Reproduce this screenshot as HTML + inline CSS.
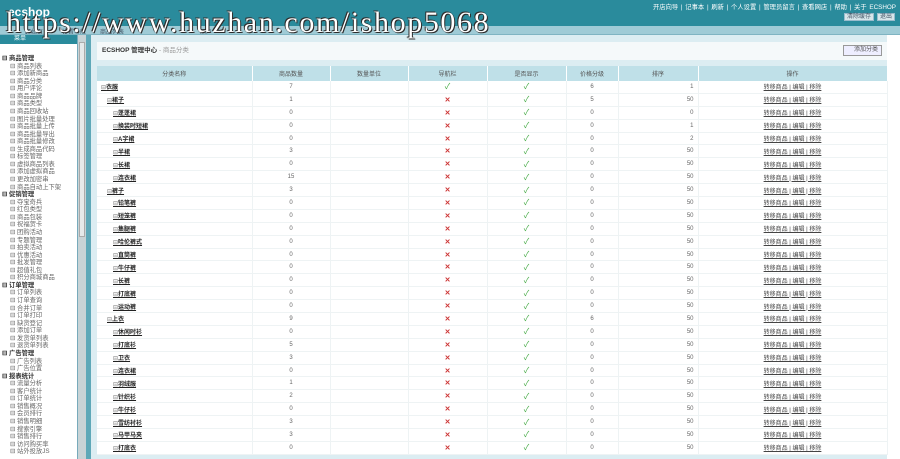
<!DOCTYPE html>
<html><head><meta charset="utf-8"><style>
*{margin:0;padding:0;box-sizing:border-box}
html,body{width:900px;height:459px;overflow:hidden}
body{background:#fff;font-family:"Liberation Sans","Noto Sans CJK SC",sans-serif;font-size:6.5px;color:#333;position:relative}
#top{position:absolute;left:0;top:0;width:900px;height:26px;background:#2a8b9c}
#logo{position:absolute;left:8px;top:5px;color:#fff;font-size:12px;font-weight:bold;letter-spacing:0px}
#links{position:absolute;right:4px;top:2px;color:#fff;font-size:6.3px;word-spacing:1px;white-space:nowrap}
#btns{position:absolute;right:5px;top:13px;white-space:nowrap}
#btns span{display:inline-block;background:#d7e6ea;color:#456;border:1px solid #9bc;font-size:6px;padding:0 2px;height:8px;line-height:7px;margin-left:3px}
#tabs{position:absolute;left:0;top:26px;width:900px;height:9px;background:#9fcbd6;border-bottom:1px solid #7fb4c2;overflow:hidden}
#tabs span{position:absolute;top:1px;font-size:6px;color:#456}
#wm{position:absolute;left:6px;top:6px;font-family:"Liberation Serif",serif;font-size:30px;color:#fff;text-shadow:0 0 1px #000,1px 1px 0 #333,-1px -1px 0 #333;letter-spacing:1.6px;z-index:9;white-space:nowrap}
#side{position:absolute;left:0;top:35px;width:78px;height:424px;background:#fff;border-right:1px solid #7ab;overflow:hidden}
#sidehd{height:9px;background:#2a8b9c;color:#fff;font-size:6px;line-height:9px;padding-left:14px}
#menu{position:absolute;left:2px;top:20px;line-height:7.56px;font-size:6.3px;color:#666;white-space:nowrap}
#menu b{font-weight:bold;color:#333}
#menu div{padding-left:8px}
#sb{position:absolute;left:78px;top:35px;width:8px;height:424px;background:#c8d3d6}
#sbt{position:absolute;left:79px;top:42px;width:6px;height:195px;background:#e5e9ea;border:1px solid #aaa}
#strip{position:absolute;left:86px;top:35px;width:5px;height:424px;background:#5ea8b8}
#main{position:absolute;left:91px;top:35px;width:809px;height:424px;background:#dcedf2}
#rwhite{position:absolute;left:887px;top:35px;width:13px;height:424px;background:#fff}
#title{position:absolute;left:97px;top:42px;width:790px;height:18px;background:#f5f9fa;font-size:6.5px;line-height:18px;padding-left:5px;font-weight:bold;color:#333}
#title i{font-style:normal;font-weight:normal;color:#999}
#add{position:absolute;left:746px;top:3px;width:39px;height:11px;border:1px solid #999;background:#eef;font-size:6px;line-height:9px;padding-left:10px;color:#555;font-weight:normal}
table{position:absolute;left:97px;top:66px;width:790px;border-collapse:collapse;background:#fff;table-layout:fixed}
th{height:14.5px;background:#bfe0e8;font-weight:normal;font-size:6px;color:#555;border-right:1px solid #fff}
td{height:12.9px;border-bottom:1px solid #eef3f4;border-right:1px solid #eef3f4;text-align:center;font-size:6px;color:#666;padding:0;white-space:nowrap;overflow:hidden}
td.n{text-align:left;color:#222;text-decoration:underline;font-weight:bold}
td.n s{text-decoration:none;font-weight:normal;color:#777}
td.r{text-align:right;padding-right:4px}
.x{color:#c33;font-weight:bold;font-size:7px}.c{color:#4a4;font-size:8px}
.op{text-decoration:underline;color:#444}
</style></head><body>
<div id="top"><div id="logo">ecshop</div>
<div id="links">开店向导 | 记事本 | 刷新 | 个人设置 | 管理员留言 | 查看网店 | 帮助 | 关于 ECSHOP</div>
<div id="btns"><span>清除缓存</span><span>退出</span></div></div>
<div id="tabs"><span style="left:25px">起始页</span><span style="left:62px">设置导航</span><span style="left:100px">商品列表</span><span style="left:200px">用户</span></div>
<div id="wm">https://www.huzhan.com/ishop5068</div>
<div id="side"><div id="sidehd">菜单</div>
<div id="menu">
<b>⊟ 商品管理</b><div>⊟ 商品列表</div><div>⊟ 添加新商品</div><div>⊟ 商品分类</div><div>⊟ 用户评论</div><div>⊟ 商品品牌</div><div>⊟ 商品类型</div><div>⊟ 商品回收站</div><div>⊟ 图片批量处理</div><div>⊟ 商品批量上传</div><div>⊟ 商品批量导出</div><div>⊟ 商品批量修改</div><div>⊟ 生成商品代码</div><div>⊟ 标签管理</div><div>⊟ 虚拟商品列表</div><div>⊟ 添加虚拟商品</div><div>⊟ 更改加密串</div><div>⊟ 商品自动上下架</div>
<b>⊟ 促销管理</b><div>⊟ 夺宝奇兵</div><div>⊟ 红包类型</div><div>⊟ 商品包装</div><div>⊟ 祝福贺卡</div><div>⊟ 团购活动</div><div>⊟ 专题管理</div><div>⊟ 拍卖活动</div><div>⊟ 优惠活动</div><div>⊟ 批发管理</div><div>⊟ 超值礼包</div><div>⊟ 积分商城商品</div>
<b>⊟ 订单管理</b><div>⊟ 订单列表</div><div>⊟ 订单查询</div><div>⊟ 合并订单</div><div>⊟ 订单打印</div><div>⊟ 缺货登记</div><div>⊟ 添加订单</div><div>⊟ 发货单列表</div><div>⊟ 退货单列表</div>
<b>⊟ 广告管理</b><div>⊟ 广告列表</div><div>⊟ 广告位置</div>
<b>⊟ 报表统计</b><div>⊟ 流量分析</div><div>⊟ 客户统计</div><div>⊟ 订单统计</div><div>⊟ 销售概况</div><div>⊟ 会员排行</div><div>⊟ 销售明细</div><div>⊟ 搜索引擎</div><div>⊟ 销售排行</div><div>⊟ 访问购买率</div><div>⊟ 站外投放JS</div>
</div></div>
<div id="sb"></div><div id="sbt"></div><div id="strip"></div>
<div id="main"></div><div id="rwhite"></div>
<div id="title">ECSHOP 管理中心<i> - 商品分类</i><span id="add">添加分类</span></div>
<table>
<colgroup><col style="width:155px"><col style="width:78px"><col style="width:78px"><col style="width:79px"><col style="width:79px"><col style="width:52px"><col style="width:80px"><col style="width:189px"></colgroup>
<tr><th>分类名称</th><th>商品数量</th><th>数量单位</th><th>导航栏</th><th>是否显示</th><th>价格分级</th><th>排序</th><th>操作</th></tr>
<tr><td class="n" style="padding-left:4px"><s>⊟</s>衣服</td><td>7</td><td></td><td class="c">✓</td><td class="c">✓</td><td>6</td><td class="r">1</td><td class="op">转移商品 | 编辑 | 移除</td></tr>
<tr><td class="n" style="padding-left:10px"><s>⊟</s>裙子</td><td>1</td><td></td><td class="x">✕</td><td class="c">✓</td><td>5</td><td class="r">50</td><td class="op">转移商品 | 编辑 | 移除</td></tr>
<tr><td class="n" style="padding-left:16px"><s>⊟</s>蓬蓬裙</td><td>0</td><td></td><td class="x">✕</td><td class="c">✓</td><td>0</td><td class="r">0</td><td class="op">转移商品 | 编辑 | 移除</td></tr>
<tr><td class="n" style="padding-left:16px"><s>⊟</s>换装时短裙</td><td>0</td><td></td><td class="x">✕</td><td class="c">✓</td><td>0</td><td class="r">1</td><td class="op">转移商品 | 编辑 | 移除</td></tr>
<tr><td class="n" style="padding-left:16px"><s>⊟</s>A字裙</td><td>0</td><td></td><td class="x">✕</td><td class="c">✓</td><td>0</td><td class="r">2</td><td class="op">转移商品 | 编辑 | 移除</td></tr>
<tr><td class="n" style="padding-left:16px"><s>⊟</s>半裙</td><td>3</td><td></td><td class="x">✕</td><td class="c">✓</td><td>0</td><td class="r">50</td><td class="op">转移商品 | 编辑 | 移除</td></tr>
<tr><td class="n" style="padding-left:16px"><s>⊟</s>长裙</td><td>0</td><td></td><td class="x">✕</td><td class="c">✓</td><td>0</td><td class="r">50</td><td class="op">转移商品 | 编辑 | 移除</td></tr>
<tr><td class="n" style="padding-left:16px"><s>⊟</s>连衣裙</td><td>15</td><td></td><td class="x">✕</td><td class="c">✓</td><td>0</td><td class="r">50</td><td class="op">转移商品 | 编辑 | 移除</td></tr>
<tr><td class="n" style="padding-left:10px"><s>⊟</s>裤子</td><td>3</td><td></td><td class="x">✕</td><td class="c">✓</td><td>0</td><td class="r">50</td><td class="op">转移商品 | 编辑 | 移除</td></tr>
<tr><td class="n" style="padding-left:16px"><s>⊟</s>铅笔裤</td><td>0</td><td></td><td class="x">✕</td><td class="c">✓</td><td>0</td><td class="r">50</td><td class="op">转移商品 | 编辑 | 移除</td></tr>
<tr><td class="n" style="padding-left:16px"><s>⊟</s>短笼裤</td><td>0</td><td></td><td class="x">✕</td><td class="c">✓</td><td>0</td><td class="r">50</td><td class="op">转移商品 | 编辑 | 移除</td></tr>
<tr><td class="n" style="padding-left:16px"><s>⊟</s>集腿裤</td><td>0</td><td></td><td class="x">✕</td><td class="c">✓</td><td>0</td><td class="r">50</td><td class="op">转移商品 | 编辑 | 移除</td></tr>
<tr><td class="n" style="padding-left:16px"><s>⊟</s>哈伦裤式</td><td>0</td><td></td><td class="x">✕</td><td class="c">✓</td><td>0</td><td class="r">50</td><td class="op">转移商品 | 编辑 | 移除</td></tr>
<tr><td class="n" style="padding-left:16px"><s>⊟</s>直筒裤</td><td>0</td><td></td><td class="x">✕</td><td class="c">✓</td><td>0</td><td class="r">50</td><td class="op">转移商品 | 编辑 | 移除</td></tr>
<tr><td class="n" style="padding-left:16px"><s>⊟</s>牛仔裤</td><td>0</td><td></td><td class="x">✕</td><td class="c">✓</td><td>0</td><td class="r">50</td><td class="op">转移商品 | 编辑 | 移除</td></tr>
<tr><td class="n" style="padding-left:16px"><s>⊟</s>长裤</td><td>0</td><td></td><td class="x">✕</td><td class="c">✓</td><td>0</td><td class="r">50</td><td class="op">转移商品 | 编辑 | 移除</td></tr>
<tr><td class="n" style="padding-left:16px"><s>⊟</s>打底裤</td><td>0</td><td></td><td class="x">✕</td><td class="c">✓</td><td>0</td><td class="r">50</td><td class="op">转移商品 | 编辑 | 移除</td></tr>
<tr><td class="n" style="padding-left:16px"><s>⊟</s>运动裤</td><td>0</td><td></td><td class="x">✕</td><td class="c">✓</td><td>0</td><td class="r">50</td><td class="op">转移商品 | 编辑 | 移除</td></tr>
<tr><td class="n" style="padding-left:10px"><s>⊟</s>上衣</td><td>9</td><td></td><td class="x">✕</td><td class="c">✓</td><td>6</td><td class="r">50</td><td class="op">转移商品 | 编辑 | 移除</td></tr>
<tr><td class="n" style="padding-left:16px"><s>⊟</s>休闲时衫</td><td>0</td><td></td><td class="x">✕</td><td class="c">✓</td><td>0</td><td class="r">50</td><td class="op">转移商品 | 编辑 | 移除</td></tr>
<tr><td class="n" style="padding-left:16px"><s>⊟</s>打底衫</td><td>5</td><td></td><td class="x">✕</td><td class="c">✓</td><td>0</td><td class="r">50</td><td class="op">转移商品 | 编辑 | 移除</td></tr>
<tr><td class="n" style="padding-left:16px"><s>⊟</s>卫衣</td><td>3</td><td></td><td class="x">✕</td><td class="c">✓</td><td>0</td><td class="r">50</td><td class="op">转移商品 | 编辑 | 移除</td></tr>
<tr><td class="n" style="padding-left:16px"><s>⊟</s>连衣裙</td><td>0</td><td></td><td class="x">✕</td><td class="c">✓</td><td>0</td><td class="r">50</td><td class="op">转移商品 | 编辑 | 移除</td></tr>
<tr><td class="n" style="padding-left:16px"><s>⊟</s>羽绒服</td><td>1</td><td></td><td class="x">✕</td><td class="c">✓</td><td>0</td><td class="r">50</td><td class="op">转移商品 | 编辑 | 移除</td></tr>
<tr><td class="n" style="padding-left:16px"><s>⊟</s>针织衫</td><td>2</td><td></td><td class="x">✕</td><td class="c">✓</td><td>0</td><td class="r">50</td><td class="op">转移商品 | 编辑 | 移除</td></tr>
<tr><td class="n" style="padding-left:16px"><s>⊟</s>牛仔衫</td><td>0</td><td></td><td class="x">✕</td><td class="c">✓</td><td>0</td><td class="r">50</td><td class="op">转移商品 | 编辑 | 移除</td></tr>
<tr><td class="n" style="padding-left:16px"><s>⊟</s>雪纺衬衫</td><td>3</td><td></td><td class="x">✕</td><td class="c">✓</td><td>0</td><td class="r">50</td><td class="op">转移商品 | 编辑 | 移除</td></tr>
<tr><td class="n" style="padding-left:16px"><s>⊟</s>马甲马夹</td><td>3</td><td></td><td class="x">✕</td><td class="c">✓</td><td>0</td><td class="r">50</td><td class="op">转移商品 | 编辑 | 移除</td></tr>
<tr><td class="n" style="padding-left:16px"><s>⊟</s>打底衣</td><td>0</td><td></td><td class="x">✕</td><td class="c">✓</td><td>0</td><td class="r">50</td><td class="op">转移商品 | 编辑 | 移除</td></tr>
</table>
</body></html>
